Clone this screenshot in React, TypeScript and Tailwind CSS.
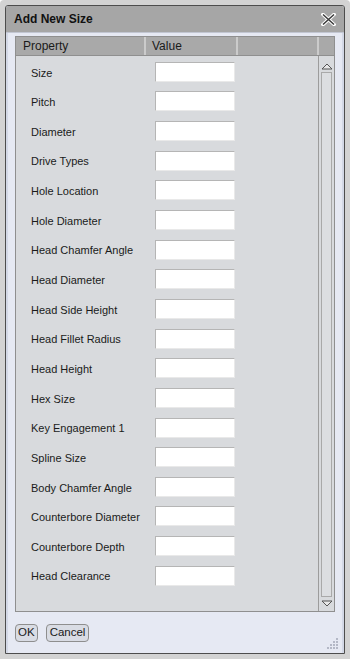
import React from 'react';

const FIELDS = [
  'Size',
  'Pitch',
  'Diameter',
  'Drive Types',
  'Hole Location',
  'Hole Diameter',
  'Head Chamfer Angle',
  'Head Diameter',
  'Head Side Height',
  'Head Fillet Radius',
  'Head Height',
  'Hex Size',
  'Key Engagement 1',
  'Spline Size',
  'Body Chamfer Angle',
  'Counterbore Diameter',
  'Counterbore Depth',
  'Head Clearance',
];

const font = { fontFamily: '"Liberation Sans", Arial, sans-serif' };

function Grip() {
  const dots = [
    [9, 0], [9, 3], [6, 3], [9, 6], [6, 6], [3, 6], [9, 9], [6, 9], [3, 9], [0, 9],
  ];
  return (
    <svg width="11" height="11" className="absolute right-[4px] bottom-[4px]">
      {dots.map(([x, y], i) => (
        <rect key={i} x={x} y={y} width="2" height="2" fill="#b4b8c6" />
      ))}
    </svg>
  );
}

export default function App() {
  return (
    <div className="w-[350px] h-[659px] bg-[#d3d3d3] p-[5px] rounded-t-[4px]" style={font}>
      <div className="h-full flex flex-col border border-[#4d4d4d] rounded-t-[3px] bg-[#e6e9f3] overflow-hidden">
        {/* title bar */}
        <div className="h-[27px] shrink-0 bg-[#a6a6a6] flex items-center justify-between pl-[8px] pr-[8px] border-b border-[#c2c6d2]">
          <span className="text-[12px] font-bold text-[#111]">Add New Size</span>
          <svg width="15" height="13" viewBox="0 0 15 13">
            <path d="M2 1.5 L13 11.5 M13 1.5 L2 11.5" stroke="#ffffff" strokeWidth="3.6" strokeLinecap="square" />
            <path d="M2 1.5 L13 11.5 M13 1.5 L2 11.5" stroke="#3a3a3a" strokeWidth="1.5" />
          </svg>
        </div>

        {/* content */}
        <div className="relative flex-1 flex flex-col px-[7px] pt-[3px] border-l-[2px] border-r-[2px] border-[#d3d8e6]">
          <div className="h-[576px] border border-[#8f8f8f] flex flex-col bg-[#d8dadd]">
            {/* header */}
            <div className="h-[19px] shrink-0 flex bg-[#a9a9a9] text-[12px] text-[#1a1a1a] border-b border-[#8f8f8f]">
              <div className="w-[130px] pl-[7px] flex items-center border-r-[2px] border-[#cbcbcb]">Property</div>
              <div className="w-[92px] pl-[6px] flex items-center border-r-[2px] border-[#cbcbcb]">Value</div>
              <div className="flex-1 border-r-[2px] border-[#cbcbcb]" />
              <div className="w-[15px]" />
            </div>
            <div className="flex-1 flex">
              <div className="flex-1 flex flex-col pt-[1px]">
                {FIELDS.map((f) => (
                  <div key={f} className="h-[29.65px] flex items-center text-[11px] text-[#1a1a1a]">
                    <div className="w-[139px] pl-[15px] pt-[2px] whitespace-nowrap">{f}</div>
                    <div className="w-[80px] h-[20px] bg-white border-t border-l border-[#b5b5b5] border-b border-r border-b-[#e9e9e9] border-r-[#e9e9e9]" />
                  </div>
                ))}
              </div>
              {/* scrollbar */}
              <div className="w-[16px] border-l border-[#9c9c9c] bg-[#d8dadd] flex flex-col items-center">
                <svg width="12" height="8" className="mt-[6px]">
                  <path d="M1 7 L6 2 L11 7 Z" fill="#e8e8e8" stroke="#555" strokeWidth="1" />
                </svg>
                <div className="mt-[2px] flex-1 w-[11px] border border-[#a9a9a9] bg-[#dcdee1]" />
                <svg width="12" height="8" className="mt-[3px] mb-[3px]">
                  <path d="M1 1 L6 6 L11 1 Z" fill="#e8e8e8" stroke="#555" strokeWidth="1" />
                </svg>
              </div>
            </div>
          </div>

          {/* buttons */}
          <div className="flex gap-[8px] mt-[12px]">
            <button className="h-[18px] px-[2px] text-[11.5px] text-[#1a1a1a] bg-[#d9dce4] border border-[#8e8e8e] rounded-[4px] leading-none">OK</button>
            <button className="h-[18px] px-[3px] text-[11.5px] text-[#1a1a1a] bg-[#d9dce4] border border-[#8e8e8e] rounded-[4px] leading-none">Cancel</button>
          </div>
          <Grip />
        </div>
      </div>
    </div>
  );
}
